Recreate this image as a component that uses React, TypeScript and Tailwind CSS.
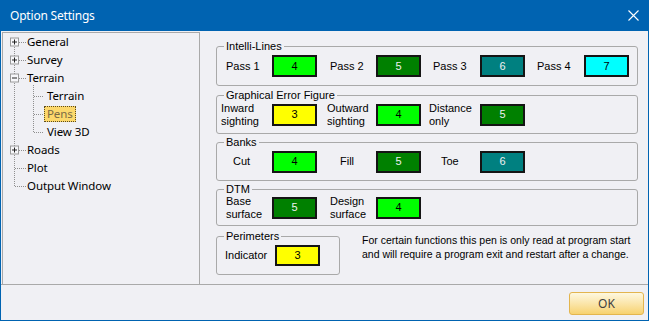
import React from 'react'

type Pen = { label: string; lines?: string[]; value: number; pl: string }

const penColors: Record<number, string> = {
  3: 'bg-[#ffff00] text-black',
  4: 'bg-[#00ff00] text-black',
  5: 'bg-[#008000] text-[#f0f0f0]',
  6: 'bg-[#008080] text-[#f0f0f0]',
  7: 'bg-[#00ffff] text-black',
}

function PenBox({ value, h = 'h-[22px]' }: { value: number; h?: string }) {
  return (
    <div
      className={`w-[45px] ${h} border-2 border-[#141414] flex items-center justify-center text-[11px] ${penColors[value]}`}
    >
      {value}
    </div>
  )
}

function PenItem({ pen }: { pen: Pen }) {
  return (
    <div className="w-[104px] flex items-center">
      <div className={`w-[51px] ${pen.pl} leading-[13px]`}>
        {pen.lines ? pen.lines.map(l => <div key={l}>{l}</div>) : pen.label}
      </div>
      <PenBox value={pen.value} />
    </div>
  )
}

function Group({
  title,
  h,
  mt,
  children,
}: {
  title: string
  h: string
  mt: string
  children: React.ReactNode
}) {
  return (
    <div className={`relative ${h} ${mt} border border-[#a9a9a9] rounded-[3px] flex items-center pl-[4px]`}>
      <span className="absolute left-[7px] top-[-8px] px-[2px] bg-[#f0f0f4] leading-[14px]">{title}</span>
      {children}
    </div>
  )
}

const rows: { text: string; level: number; selected?: boolean }[] = [
  { text: 'General', level: 0 },
  { text: 'Survey', level: 0 },
  { text: 'Terrain', level: 0 },
  { text: 'Terrain', level: 1 },
  { text: 'Pens', level: 1, selected: true },
  { text: 'View 3D', level: 1 },
  { text: 'Roads', level: 0 },
  { text: 'Plot', level: 0 },
  { text: 'Output Window', level: 0 },
]

function TreeLines() {
  const c = (i: number) => 9 + i * 18 + 0.5
  const box = (i: number, minus = false) => (
    <g key={'b' + i}>
      <rect x={7.5} y={c(i) - 4.5} width={8} height={8} fill="#f7f7fa" stroke="#9a9a9a" />
      <line x1={9} x2={14} y1={c(i) - 0.5} y2={c(i) - 0.5} stroke="#222" />
      {!minus && <line x1={11.5} x2={11.5} y1={c(i) - 3} y2={c(i) + 2} stroke="#222" />}
    </g>
  )
  const dot = { stroke: '#8f8f8f', strokeDasharray: '1 1', shapeRendering: 'crispEdges' as const }
  return (
    <svg className="absolute left-0 top-0 pointer-events-none" width="196" height="200">
      <line x1={11.5} x2={11.5} y1={c(0)} y2={c(8)} {...dot} />
      {[0, 1, 2, 6].map(i => (
        <line key={'h' + i} x1={16} x2={23} y1={c(i) - 0.5} y2={c(i) - 0.5} {...dot} />
      ))}
      {[7, 8].map(i => (
        <line key={'h' + i} x1={12} x2={23} y1={c(i) - 0.5} y2={c(i) - 0.5} {...dot} />
      ))}
      <line x1={30.5} x2={30.5} y1={c(2) + 6} y2={c(5)} {...dot} />
      {[3, 4, 5].map(i => (
        <line key={'c' + i} x1={31} x2={40} y1={c(i) - 0.5} y2={c(i) - 0.5} {...dot} />
      ))}
      {box(0)}
      {box(1)}
      {box(2, true)}
      {box(6)}
    </svg>
  )
}

export default function App() {
  return (
    <div className="w-[649px] h-[321px] flex flex-col bg-[#0063b1] font-['Liberation_Sans',Arial,sans-serif] text-[11px] text-black">
      {/* title bar */}
      <div className="h-[31px] flex items-center justify-between pl-[10px] pr-[10px] shrink-0">
        <span className="text-white text-[12px] tracking-[-0.2px] font-['Noto_Sans',sans-serif]">Option Settings</span>
        <svg width="11" height="11" viewBox="0 0 11 11">
          <path d="M0.5 0.5 L10.5 10.5 M10.5 0.5 L0.5 10.5" stroke="#fff" strokeWidth="1.1" />
        </svg>
      </div>

      <div className="flex-1 mx-[1px] mb-[1px] bg-[#f0f0f4] flex flex-col">
        <div className="h-[254px] flex border-b border-[#a9a9a9] pt-[1px]">
          {/* tree */}
          <div className="relative shrink-0 w-[198px] ml-[1px] border-l border-t border-r border-[#a9a9a9] font-['Noto_Sans',sans-serif] text-[11.5px] tracking-[-0.1px]">
            <TreeLines />
            {rows.map((r, i) => (
              <div key={i} className={`h-[18px] flex items-center ${r.level === 0 ? 'pl-[24px]' : 'pl-[41px]'}`}>
                {r.selected ? (
                  <span className="h-[16px] px-[2px] flex items-center bg-[#fcd86c] border border-dotted border-[#5a4a20] text-[#7a6a44]">
                    {r.text}
                  </span>
                ) : (
                  <span className={r.level === 1 ? 'pl-[3px]' : ''}>{r.text}</span>
                )}
              </div>
            ))}
          </div>

          {/* pens panel */}
          <div className="flex-1 min-w-0 pl-[16px] pr-[10px] pt-[14px]">
            <Group title="Intelli-Lines" h="h-[40px]" mt="mt-0">
              <PenItem pen={{ label: 'Pass 1', value: 4, pl: 'pl-[5px]' }} />
              <PenItem pen={{ label: 'Pass 2', value: 5, pl: 'pl-[5px]' }} />
              <PenItem pen={{ label: 'Pass 3', value: 6, pl: 'pl-[4px]' }} />
              <PenItem pen={{ label: 'Pass 4', value: 7, pl: 'pl-[4px]' }} />
            </Group>
            <Group title="Graphical Error Figure" h="h-[39px]" mt="mt-[9px]">
              <PenItem pen={{ label: '', lines: ['Inward', 'sighting'], value: 3, pl: 'pl-0' }} />
              <PenItem pen={{ label: '', lines: ['Outward', 'sighting'], value: 4, pl: 'pl-[2px]' }} />
              <PenItem pen={{ label: '', lines: ['Distance', 'only'], value: 5, pl: 'pl-0' }} />
            </Group>
            <Group title="Banks" h="h-[39px]" mt="mt-[8px]">
              <PenItem pen={{ label: 'Cut', value: 4, pl: 'pl-[12px]' }} />
              <PenItem pen={{ label: 'Fill', value: 5, pl: 'pl-[15px]' }} />
              <PenItem pen={{ label: 'Toe', value: 6, pl: 'pl-[12px]' }} />
            </Group>
            <Group title="DTM" h="h-[37px]" mt="mt-[8px]">
              <PenItem pen={{ label: '', lines: ['Base', 'surface'], value: 5, pl: 'pl-[5px]' }} />
              <PenItem pen={{ label: '', lines: ['Design', 'surface'], value: 4, pl: 'pl-[5px]' }} />
            </Group>
            <div className="flex items-start mt-[10px]">
              <div className="relative shrink-0 w-[124px] h-[39px] border border-[#a9a9a9] rounded-[3px] flex items-center pl-[8px]">
                <span className="absolute left-[7px] top-[-8px] px-[2px] bg-[#f0f0f4] leading-[14px]">Perimeters</span>
                <span className="w-[50px]">Indicator</span>
                <PenBox value={3} h="h-[21px]" />
              </div>
              <p className="ml-[22px] mt-[-3px] leading-[14px] whitespace-nowrap text-[10.5px]">
                For certain functions this pen is only read at program start
                <br />
                and will require a program exit and restart after a change.
              </p>
            </div>
          </div>
        </div>

        {/* buttons */}
        <div className="flex-1 flex items-center justify-end pr-[4px] pt-[2px]">
          <button className="w-[75px] h-[23px] rounded-[3px] border border-[#e3b54e] bg-gradient-to-b from-[#fef8df] to-[#f7d26e] text-[#404040] text-[12px] font-['Noto_Sans',sans-serif]">
            OK
          </button>
        </div>
      </div>
    </div>
  )
}
